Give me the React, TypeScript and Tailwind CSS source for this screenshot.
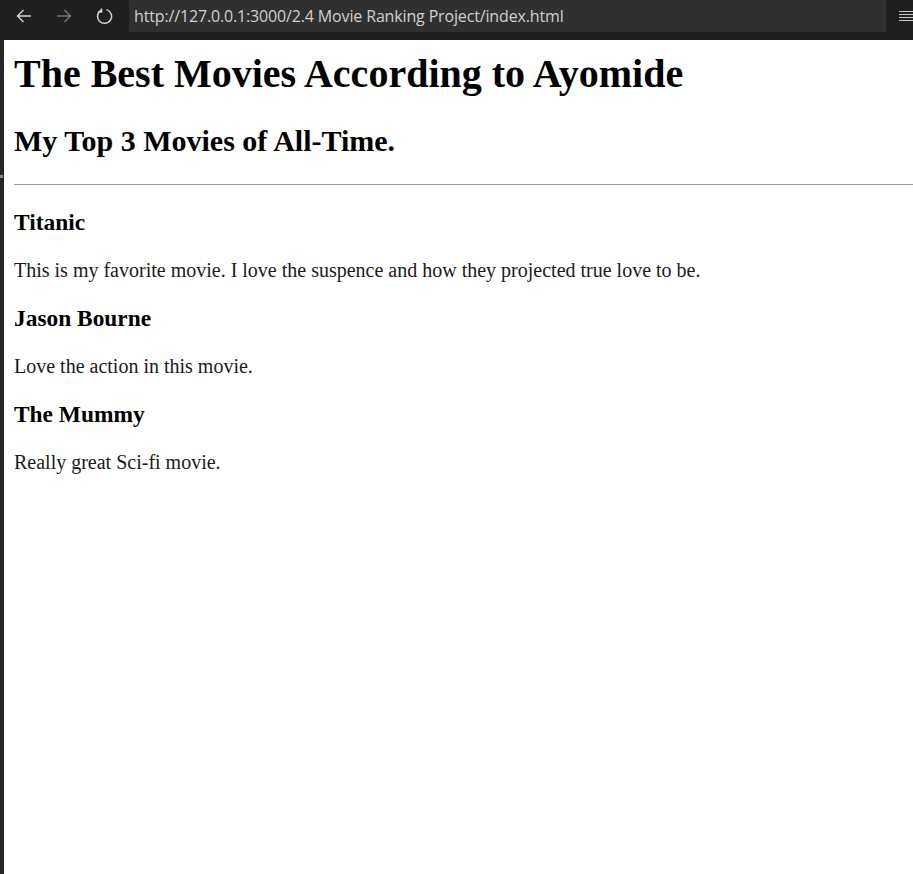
import React from 'react';

const movies = [
    { title: 'Titanic', note: 'This is my favorite movie. I love the suspence and how they projected true love to be.' },
    { title: 'Jason Bourne', note: 'Love the action in this movie.' },
    { title: 'The Mummy', note: 'Really great Sci-fi movie.' },
];

const App: React.FC = () => {
    return (
        <div className="h-[874px] w-[913px] overflow-hidden flex flex-col bg-white">
            {/* Browser toolbar */}
            <div className="h-[40px] bg-[#1f1f1f] flex items-start shrink-0">
                <div className="h-[32px] flex items-center text-[#d4d4d4]">
                    <svg className="ml-[15px]" width="18" height="18" viewBox="0 0 18 18" fill="none" stroke="currentColor" strokeWidth="1.4">
                        <path d="M16 9H2.5M8.5 3L2.5 9l6 6" />
                    </svg>
                    <svg className="ml-[22px] text-[#7a7a7a]" width="18" height="18" viewBox="0 0 18 18" fill="none" stroke="currentColor" strokeWidth="1.4">
                        <path d="M2 9h13.5M9.5 3l6 6-6 6" />
                    </svg>
                    <svg className="ml-[22px]" width="18" height="18" viewBox="0 0 18 18" fill="none" stroke="currentColor" strokeWidth="1.5">
                        <path d="M6.2 3.2A7 7 0 1 0 11.5 2.6" />
                        <path d="M6.6 1.5v3.4H3.2" />
                    </svg>
                </div>
                <div className="ml-[16px] w-[760px] h-[32px] bg-[#303030] flex items-center pl-[5px] text-[#d0d0d0] text-[16px] font-['Open_Sans',sans-serif] tracking-[-0.15px]">
                    http://127.0.0.1:3000/2.4 Movie Ranking Project/index.html
                </div>
                <div className="ml-[13px] h-[32px] flex items-center">
                    <svg width="14" height="12" viewBox="0 0 14 12" fill="none" stroke="#c8c8c8" strokeWidth="1.2">
                        <path d="M0 1.5h14M0 4.5h14M0 7.5h14M0 10.5h14" />
                    </svg>
                </div>
            </div>

            {/* Page */}
            <div className="flex flex-1 min-h-0">
                <div className="w-[4px] bg-[#252526] shrink-0 relative">
                    <div className="absolute left-0 top-[135px] w-[3px] h-[3px] bg-[#8a8a8a]" />
                </div>
                <div className="flex-1 pl-[10px] pt-[0.1px] text-black font-['Liberation_Serif','Times_New_Roman',serif]">
                    <h1 className="text-[40px] font-bold mt-[10.5px] mb-[27px] leading-[1.15]">The Best Movies According to Ayomide</h1>
                    <h2 className="text-[30px] font-bold mt-0 mb-[26px] leading-[1.15]">My Top 3 Movies of All-Time.</h2>
                    <hr className="m-0 border-0 border-t border-[#9a9a9a]" />
                    {movies.map((m) => (
                        <div key={m.title}>
                            <h3 className="text-[23.4px] font-bold mt-[23.5px] mb-[23px] leading-[1.15]">{m.title}</h3>
                            <p className="text-[20px] my-[20px] leading-[1.15] text-[#1a1a1a]">{m.note}</p>
                        </div>
                    ))}
                </div>
            </div>
        </div>
    );
};

export default App;
